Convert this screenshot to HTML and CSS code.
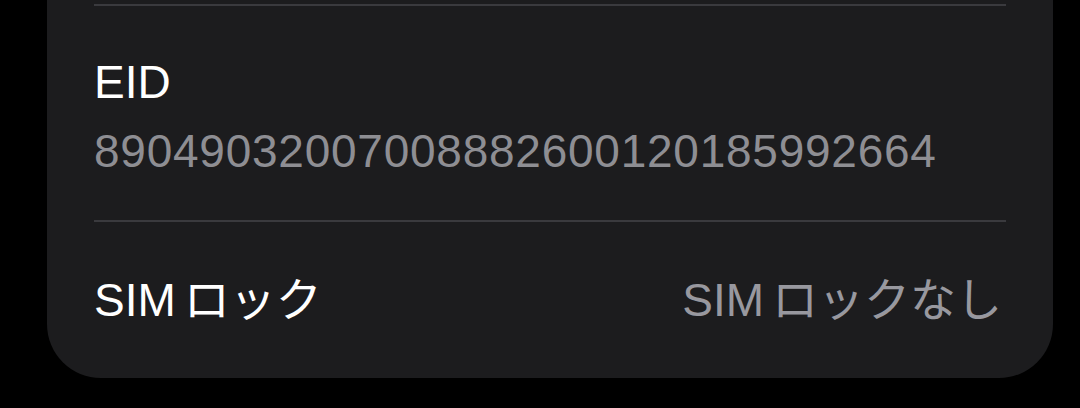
FILE: index.html
```html
<!DOCTYPE html>
<html lang="ja">
<head>
<meta charset="utf-8">
<link rel="stylesheet" href="styles.css">
</head>
<body>
<div class="card">
  <div class="sep"></div>
  <div class="row-stack">
    <div class="label">EID</div>
    <div class="value">89049032007008882600120185992664</div>
  </div>
  <div class="sep"></div>
  <div class="row-inline">
    <div class="label">SIM<span class="jp">ロック</span></div>
    <div class="detail">SIM<span class="jp">ロックなし</span></div>
  </div>
</div>
</body>
</html>
```
FILE: styles.css
```css
html, body {
  margin: 0;
  padding: 0;
  background: #000;
  width: 1080px;
  height: 408px;
  overflow: hidden;
}
body {
  font-family: "Liberation Sans", "Noto Sans CJK JP", sans-serif;
  font-size: 46px;
  line-height: 56px;
}
.card {
  margin-left: 47px;
  width: 1006px;
  height: 378px;
  background: #1c1c1e;
  border-radius: 0 0 54px 54px;
  display: flex;
  flex-direction: column;
  padding-top: 4px;
  box-sizing: border-box;
}
.sep {
  height: 2px;
  margin: 0 47px;
  background: #3a3a3e;
  flex: none;
}
.row-stack {
  padding: 48px 47px 41px 47px;
  display: flex;
  flex-direction: column;
  gap: 13px;
}
.label {
  color: #fff;
}
.value {
  color: #8e8e93;
  letter-spacing: 0.75px;
}
.row-inline {
  flex: 1;
  display: flex;
  align-items: center;
  justify-content: space-between;
  padding: 0 51px 0 47px;
}
.detail {
  color: #98989f;
}
.jp {
  margin-left: 8px;
}
```
